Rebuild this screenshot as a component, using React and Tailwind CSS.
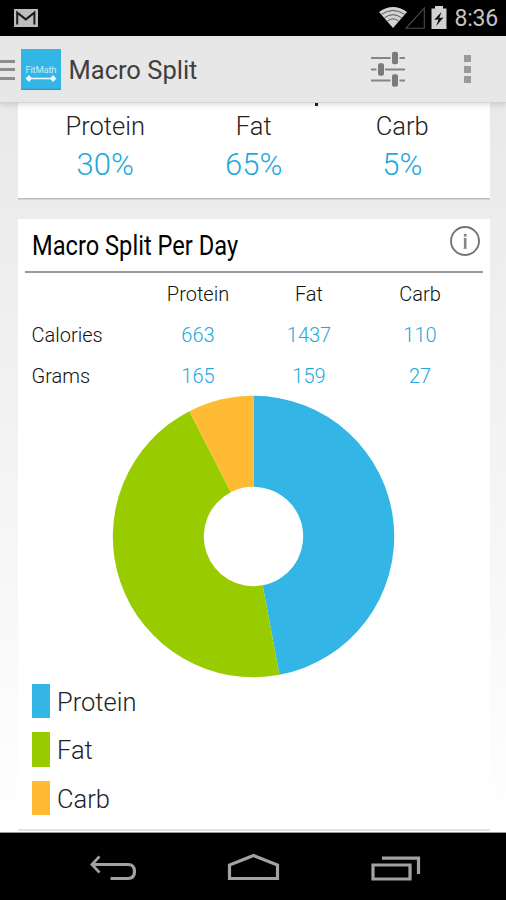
const columns = ["Protein", "Fat", "Carb"];

const percentages = ["30%", "65%", "5%"];

const rows = [
  { id: "calories", label: "Calories", values: ["663", "1437", "110"] },
  { id: "grams", label: "Grams", values: ["165", "159", "27"] },
];

const slices = [
  { label: "Protein", share: 0.4705, color: "#33b5e5", swatch: "bg-[#33b5e5]" },
  { label: "Fat", share: 0.4542, color: "#99cc00", swatch: "bg-[#99cc00]" },
  { label: "Carb", share: 0.0753, color: "#ffbb33", swatch: "bg-[#ffbb33]" },
];

const GmailIcon = () => (
  <svg width="24" height="18" viewBox="0 0 24 18" className="mt-[9px]">
    <rect width="24" height="18" rx="0.5" fill="#bdbdbd" />
    <path d="M3.2 15.5V3.6l8.6 6.8 8.6-6.8V15.5" fill="none" stroke="#1c1c1c" strokeWidth="2" />
  </svg>
);

const WifiIcon = () => (
  <svg width="28" height="21" viewBox="0 0 28 21" className="mt-[7px]">
    <path d="M0 5Q14-5 28 5L14 21Z" fill="#d2d2d2" />
    <g fill="none" stroke="#555" strokeWidth="1">
      <path d="M2.5 7.3Q14-.3 25.5 7.3" />
      <path d="M5.5 10.8Q14 4.6 22.5 10.8" />
      <path d="M8.5 14Q14 9.6 19.5 14" />
    </g>
  </svg>
);

const SignalIcon = () => (
  <svg width="20" height="22" viewBox="0 0 20 22" className="-ml-[2px] mt-[6.5px]">
    <path d="M1 21.3H19.3V1Z" fill="none" stroke="#4c4c4c" strokeWidth="1.1" />
  </svg>
);

const BatteryIcon = () => (
  <svg width="16" height="23" viewBox="0 0 16 23" className="ml-[6px] mt-[6px]">
    <path d="M4 0h8v2.5h3.5V23H.5V2.5H4Z" fill="#d2d2d2" />
    <path d="M10.5 6 3.2 13.8l4.3-.4L5.2 20l7.3-8.6-4.2.6Z" fill="#111" />
  </svg>
);

const SlidersIcon = () => (
  <svg width="36" height="36" viewBox="0 0 36 36" className="ml-auto mt-[15px]">
    <g stroke="#858585" strokeWidth="2">
      <path d="M1 7h19.5M29.5 7H35M1 18.5h5.5M15 18.5h20M1 29.5h19.5M29.5 29.5H35" />
    </g>
    <g fill="#7b7b7b">
      <rect x="22" y="0.7" width="6" height="12.6" rx="2" />
      <rect x="8" y="12.2" width="6" height="12.6" rx="2" />
      <rect x="22" y="23.2" width="6" height="12.6" rx="2" />
    </g>
  </svg>
);

const AppLogo = () => (
  <svg width="40" height="41" viewBox="0 0 40 41" className="ml-[5.5px] mt-[13.5px]">
    <rect width="40" height="41" fill="#33b5e5" />
    <path d="M0 40.3H40" stroke="#3596b8" strokeWidth="1.2" />
    <text
      x="20"
      y="23.6"
      textAnchor="middle"
      textLength="31"
      fontFamily="Roboto, sans-serif"
      fontSize="9.5"
      fill="#c5ecfa"
    >
      FitMath
    </text>
    <path d="M8 29.5H32" stroke="#e8f8fd" strokeWidth="1.6" />
    <path d="M4.5 29.5 8 26 11 29.5 8 33ZM35.5 29.5 32 26 29 29.5 32 33Z" fill="#e8f8fd" />
  </svg>
);

const InfoIcon = () => (
  <svg width="30" height="30" viewBox="0 0 30 30" className="mt-[7px]">
    <circle cx="15" cy="15" r="14" fill="none" stroke="#747474" strokeWidth="1.9" />
    <path d="M13.6 12.4h2M13.4 22.2h3.6" fill="none" stroke="#999" strokeWidth="0.8" />
    <path d="M15.2 12V22.6" stroke="#858585" strokeWidth="2.6" />
    <rect x="13.8" y="7.8" width="2.8" height="2.8" fill="#858585" />
  </svg>
);

const polar = (radius, turn) => {
  const angle = turn * Math.PI * 2;
  return `${141.5 + radius * Math.sin(angle)} ${141.5 - radius * Math.cos(angle)}`;
};

const DonutChart = () => {
  const outer = 140.7;
  const inner = 49.7;
  let start = 0;

  return (
    <svg width="283" height="283" viewBox="0 0 283 283" className="-mt-[2px] ml-[94px] block">
      {slices.map((slice) => {
        const from = start;
        const to = start + slice.share;
        start = to;
        const large = slice.share > 0.5 ? 1 : 0;
        return (
          <path
            key={slice.label}
            fill={slice.color}
            d={`M${polar(outer, from)}A${outer} ${outer} 0 ${large} 1 ${polar(outer, to)}L${polar(inner, to)}A${inner} ${inner} 0 ${large} 0 ${polar(inner, from)}Z`}
          />
        );
      })}
    </svg>
  );
};

const StatusBar = () => (
  <div className="flex h-[35.5px] shrink-0 items-start bg-black pl-[14px] pr-[8px]">
    <GmailIcon />
    <div className="ml-auto flex items-start">
      <WifiIcon />
      <SignalIcon />
      <BatteryIcon />
      <span className="ml-[8px] w-[43.5px] text-[23px] leading-[37px] tracking-[-0.2px] text-[#c4c4c4]">
        8:36
      </span>
    </div>
  </div>
);

const ActionBar = () => (
  <header className="relative z-10 flex h-[67.5px] shrink-0 items-start border-b border-[#d2d2d2] bg-[#e7e7e7] shadow-[0_1px_6px_rgba(0,0,0,0.16)]">
    <div className="mt-[24px] flex w-[15px] flex-col gap-[5.5px]">
      <div className="h-[3px] bg-[#8d8d8d]" />
      <div className="h-[3px] bg-[#8d8d8d]" />
      <div className="h-[3px] bg-[#8d8d8d]" />
    </div>
    <AppLogo />
    <h1 className="ml-[8px] mt-[16px] whitespace-nowrap text-[25.5px] font-normal leading-[37px] text-[#3f3f3f]">
      Macro Split
    </h1>
    <SlidersIcon />
    <div className="ml-[58px] mr-[35px] mt-[19.5px] flex w-[7px] flex-col gap-[3.5px]">
      <div className="h-[7px] bg-[#9a9a9a]" />
      <div className="h-[7px] bg-[#9a9a9a]" />
      <div className="h-[7px] bg-[#9a9a9a]" />
    </div>
  </header>
);

const SummaryCard = () => (
  <section className="relative grid h-[94.5px] shrink-0 grid-cols-3 bg-white px-[13px] pt-[5px] text-center shadow-[0_1.5px_0_#bdbdbd]">
    {/* tail of the heading that is scrolled under the action bar */}
    <div className="absolute left-[297px] top-0 h-[2.5px] w-[2.5px] bg-[#222]" />
    {columns.map((name, i) => (
      <div key={name}>
        <p className="text-[25.5px] font-light leading-[37px] text-[#222]">{name}</p>
        <p className="text-[31px] font-light leading-[40px] text-[#22a9dc]">{percentages[i]}</p>
      </div>
    ))}
  </section>
);

const SplitCard = () => (
  <section className="mt-[21px] h-[610px] shrink-0 bg-white shadow-[0_2px_0_#e2e2e2]">
    <div className="mx-[7px] flex h-[54px] items-start justify-between border-b-2 border-[#9b9b9b] pl-[7px] pr-[3px]">
      <h2 className="mt-[7.5px] origin-left scale-x-[0.845] whitespace-nowrap text-[28px] font-normal leading-[40px] text-black">
        Macro Split Per Day
      </h2>
      <InfoIcon />
    </div>

    <div className="grid grid-cols-[111px_111px_111px_111px] pl-[13.5px] pt-[1.5px] text-[20px] leading-[41px]">
      <span />
      {columns.map((name) => (
        <span key={name} className="text-center font-light text-[#111]">
          {name}
        </span>
      ))}
      {rows.map((row) => (
        <div key={row.id} className="contents">
          <span className="font-light text-[#111]">{row.label}</span>
          {row.values.map((value, i) => (
            <span key={i} className="text-center font-light text-[#22a9dc]">
              {value}
            </span>
          ))}
        </div>
      ))}
    </div>

    <DonutChart />

    <ul className="flex flex-col gap-[14px] pl-[14px] pt-[6px]">
      {slices.map((slice) => (
        <li key={slice.label} className="flex h-[34.3px] items-center gap-[7px]">
          <span className={`h-full w-[18px] ${slice.swatch}`} />
          <span className="pt-[2px] text-[25.5px] font-light leading-[34px] text-[#222]">
            {slice.label}
          </span>
        </li>
      ))}
    </ul>
  </section>
);

const NavBar = () => (
  <nav className="flex h-[67px] shrink-0 items-start bg-black pl-[90px]">
    <svg width="48" height="28" viewBox="0 0 48 28" className="mt-[22px]">
      <g fill="none" stroke="#a2a2a2" strokeWidth="3.2">
        <path d="M2 9.5H38C42.5 9.5 44.5 12.5 44.5 16.5S42.5 23.5 38 23.5H20.5" />
        <path d="M9.5 1.5 1.8 9.5 9.5 17.5" strokeWidth="2.6" />
      </g>
    </svg>
    <svg width="54" height="30" viewBox="0 0 54 30" className="ml-[89px] mt-[19px]">
      <path d="M2.5 26.5V13L26.5 3.5 50.5 13V26.5Z" fill="none" stroke="#a2a2a2" strokeWidth="3.2" />
    </svg>
    <svg width="50" height="26" viewBox="0 0 50 26" className="ml-[89.5px] mt-[23px]">
      <g fill="none" stroke="#a2a2a2" strokeWidth="3.2">
        <path d="M2 9H39V23H2Z" />
        <path d="M11 2.2H47.5V18" />
      </g>
    </svg>
  </nav>
);

const App = () => {
  return (
    <div className="flex h-[900px] w-[506px] flex-col overflow-hidden bg-black font-['Roboto',sans-serif]">
      <StatusBar />
      <ActionBar />
      <main className="flex h-[730px] shrink-0 flex-col overflow-hidden border-b border-[#999] bg-linear-to-b from-[#e9e9e9] to-white pl-[18px] pr-[16.5px]">
        <SummaryCard />
        <SplitCard />
      </main>
      <NavBar />
    </div>
  );
};

export default App;
